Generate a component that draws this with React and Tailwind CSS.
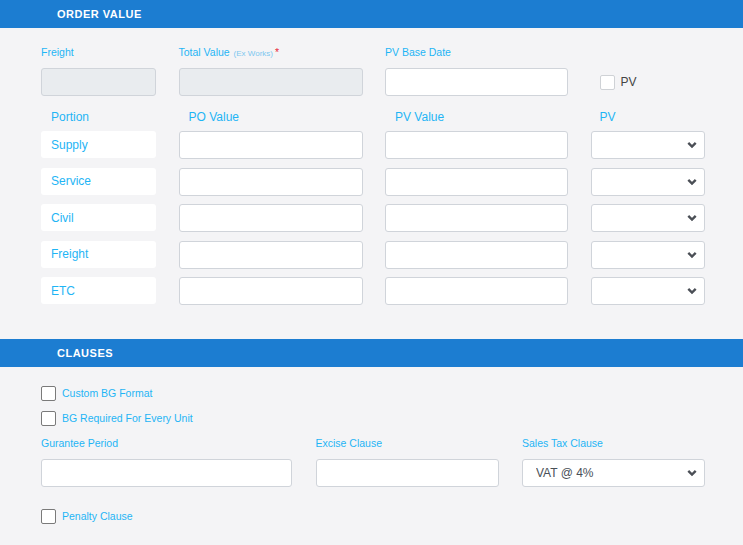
import React from 'react';

const Chevron = () => (
    <svg
        width="10"
        height="7"
        viewBox="0 0 10 7"
        className="pointer-events-none absolute right-[8px] top-1/2 -translate-y-1/2"
    >
        <path d="M1.3 1.3 L5 5 L8.7 1.3" fill="none" stroke="#4b4f56" strokeWidth="2.4" />
    </svg>
);

const Input = ({ disabled, className = '' }) => (
    <input
        type="text"
        disabled={disabled}
        className={`h-[28px] w-full rounded-[3px] border border-[#d0d4da] ${disabled ? 'bg-[#e9ecef]' : 'bg-white'} px-2 text-[12px] text-[#495057] outline-none ${className}`}
    />
);

const Select = ({ value }) => (
    <div className="relative h-[28px] w-full">
        <select
            defaultValue={value}
            className="h-full w-full appearance-none rounded-[3px] border border-[#d0d4da] bg-white pl-[13px] text-[12px] text-[#495057] outline-none"
        >
            {value ? <option>{value}</option> : <option></option>}
        </select>
        <Chevron />
    </div>
);

const SectionBar = ({ title, className = '' }) => (
    <div className={`flex h-[28px] items-center bg-[#1c7dd1] pl-[57px] ${className}`}>
        <span className="text-[11px] font-bold tracking-[0.5px] text-white">{title}</span>
    </div>
);

const Check = ({ label, light }) => (
    <label className="flex items-center gap-[6px]">
        <span
            className={`h-[15px] w-[15px] rounded-[2px] bg-white ${light ? 'border border-[#cfd2d6]' : 'border-[1.5px] border-[#7a7a7a]'}`}
        />
        <span className={light ? 'text-[12px] text-[#444]' : 'text-[10.5px] text-[#1fb5f5]'}>{label}</span>
    </label>
);

const Label = ({ children }) => (
    <div className="text-[10.5px] leading-[13px] text-[#1fb5f5]">{children}</div>
);

const portions = ['Supply', 'Service', 'Civil', 'Freight', 'ETC'];
const cols = 'grid grid-cols-[115px_184px_183px_114px] gap-x-[22.5px]';

export default function App() {
    return (
        <div className="min-h-[545px] w-[743px] bg-[#f4f4f6] font-['Liberation_Sans',Arial,sans-serif]">
            <SectionBar title="ORDER VALUE" />

            <div className="px-[41px] pt-[18px]">
                <div className={cols}>
                    <Label>Freight</Label>
                    <Label>
                        Total Value <span className="ml-[1px] text-[8px] text-[#7cc7ef]">(Ex Works)</span>
                        <span className="ml-[2px] text-[#e8283b]">*</span>
                    </Label>
                    <Label>PV Base Date</Label>
                    <div />

                    <div className="mt-[8px]"><Input disabled /></div>
                    <div className="mt-[8px]"><Input disabled /></div>
                    <div className="mt-[8px]"><Input /></div>
                    <div className="mt-[8px] flex items-center pl-[9px]"><Check label="PV" light /></div>
                </div>

                <div className={`mt-[14px] ${cols} text-[12px] leading-[14px] text-[#1fb5f5]`}>
                    <div className="pl-[10px]">Portion</div>
                    <div className="pl-[10px]">PO Value</div>
                    <div className="pl-[10px]">PV Value</div>
                    <div className="pl-[9px]">PV</div>
                </div>

                <div className="mt-[7px] flex flex-col gap-[8.5px]">
                    {portions.map((p) => (
                        <div key={p} className={cols}>
                            <div className="flex h-[27px] items-center rounded-[3px] bg-white pl-[10px] text-[12px] text-[#1fb5f5]">
                                {p}
                            </div>
                            <Input />
                            <Input />
                            <Select />
                        </div>
                    ))}
                </div>
            </div>

            <SectionBar title="CLAUSES" className="mt-[34px]" />

            <div className="px-[41px] pt-[19px]">
                <div className="flex flex-col gap-[9px]">
                    <Check label="Custom BG Format" />
                    <Check label="BG Required For Every Unit" />
                </div>

                <div className="mt-[10px] grid grid-cols-[251px_183px_183px] gap-x-[23.5px]">
                    <Label>Gurantee Period</Label>
                    <Label>Excise Clause</Label>
                    <Label>Sales Tax Clause</Label>

                    <div className="mt-[9px]"><Input /></div>
                    <div className="mt-[9px]"><Input /></div>
                    <div className="mt-[9px]"><Select value="VAT @ 4%" /></div>
                </div>

                <div className="mt-[22px] pb-[20px]">
                    <Check label="Penalty Clause" />
                </div>
            </div>
        </div>
    );
}
